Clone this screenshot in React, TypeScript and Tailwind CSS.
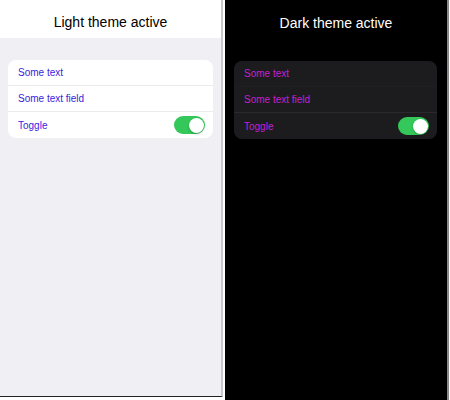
type Theme = {
  panel: string;
  header: string;
  title: string;
  card: string;
  text: string;
  sep1: string;
  sep2: string;
};

const light: Theme = {
  panel: "bg-[#efeff4]",
  header: "bg-white",
  title: "text-black",
  card: "bg-white",
  text: "text-[#3a22dc]",
  sep1: "border-[#ececf0]",
  sep2: "border-[#ececf0]",
};

const dark: Theme = {
  panel: "bg-black",
  header: "bg-black",
  title: "text-white",
  card: "bg-[#1c1c1e]",
  text: "text-[#c41fd2]",
  sep1: "border-[#1f1f21]",
  sep2: "border-[#2a2a2c]",
};

function Toggle() {
  return (
    <div className="flex h-[18px] w-[31px] items-center justify-end rounded-full bg-[#34c759] p-[1.5px]">
      <div className="h-[15px] w-[15px] rounded-full bg-white shadow-[0_1px_2px_rgba(0,0,0,0.25)]"></div>
    </div>
  );
}

function Screen({ title, theme, dark }: { title: string; theme: Theme; dark?: boolean }) {
  return (
    <div className={`flex h-full flex-col ${theme.panel}`}>
      <div
        className={`flex h-[38px] shrink-0 justify-center ${dark ? "pt-[14px]" : "pt-[13px]"} ${theme.header}`}
      >
        <span className={`text-[14px] leading-[18px] ${theme.title}`}>{title}</span>
      </div>
      <div className={`px-[8px] ${dark ? "pt-[23px] pl-[9px] pr-[10px]" : "pt-[22px]"}`}>
        <div className={`overflow-hidden rounded-[8px] ${theme.card}`}>
          <div className={`flex h-[26px] items-center border-b pl-[10px] ${theme.sep1}`}>
            <span className={`text-[10px] ${theme.text}`}>Some text</span>
          </div>
          <div className={`flex h-[26px] items-center border-b pl-[10px] ${theme.sep2}`}>
            <span className={`text-[10px] ${theme.text}`}>Some text field</span>
          </div>
          <div className="flex h-[26px] items-center justify-between pl-[10px] pr-[8px]">
            <span className={`text-[10px] ${theme.text}`}>Toggle</span>
            <Toggle />
          </div>
        </div>
      </div>
    </div>
  );
}

export default function App() {
  return (
    <div
      className="flex h-[400px] w-[450px] bg-white"
      style={{ fontFamily: '"Liberation Sans", Arial, sans-serif' }}
    >
      <div className="h-[397px] w-[223px] border-r-2 border-b border-r-[#c9c9cc] border-b-[#222]">
        <Screen title="Light theme active" theme={light} />
      </div>
      <div className="ml-[2px] h-[400px] w-[224px] border-r-2 border-[#8a8a8a]">
        <Screen title="Dark theme active" theme={dark} dark />
      </div>
    </div>
  );
}
